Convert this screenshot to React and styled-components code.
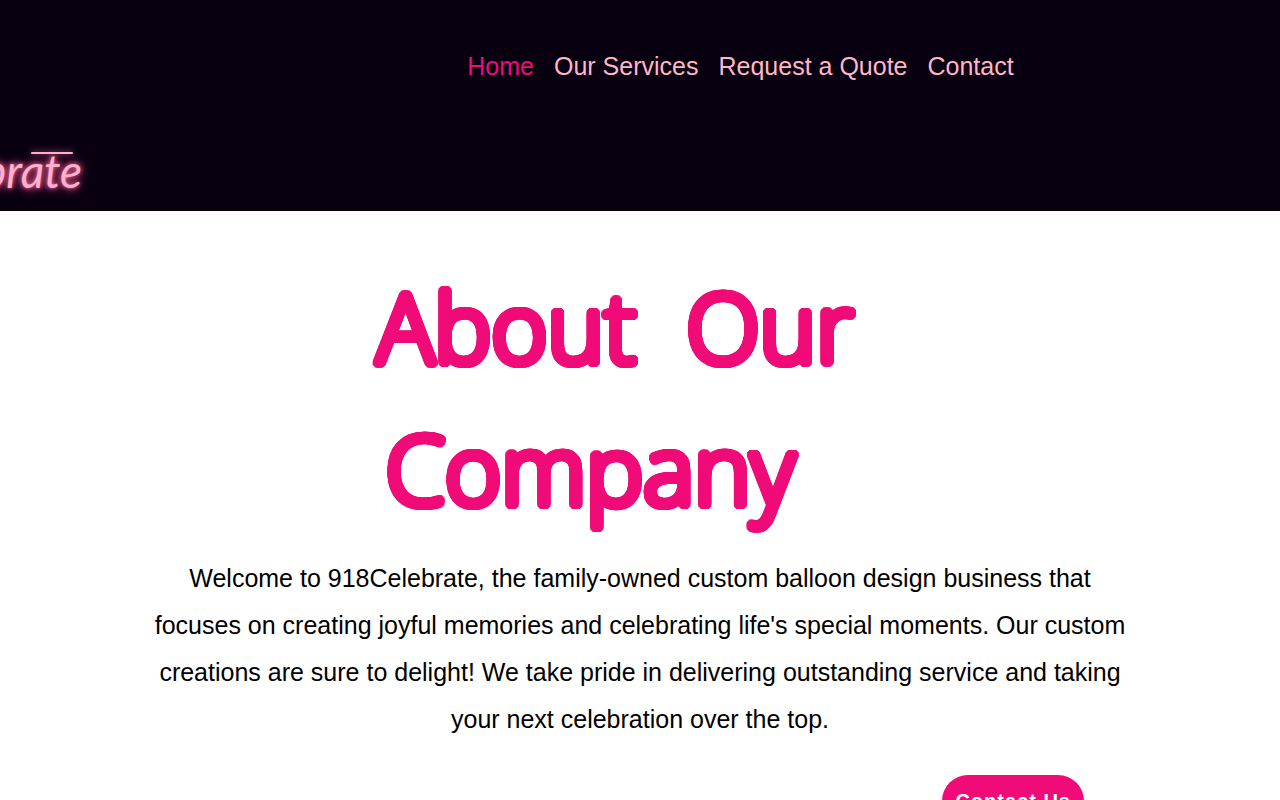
import styled, { createGlobalStyle } from "styled-components";

const GlobalStyle = createGlobalStyle`
    * {
        box-sizing: border-box;
    }

    body {
        margin: 0;
        background-color: #ffffff;
        color: #000000;
        font-family: "Liberation Sans", Arial, sans-serif;
        font-size: 25px;
    }
`;

const links = [
    { label: "Home", href: "#home", active: true },
    { label: "Our Services", href: "#services" },
    { label: "Request a Quote", href: "#quote" },
    { label: "Contact", href: "#contact" },
];

// hard shadows in a ring give the light letters a thick, rounded marker look
const markerOutline = [
    [4, 0],
    [4, 1],
    [4, 2],
    [3, 3],
    [2, 4],
    [1, 4],
    [0, 4],
]
    .flatMap(([x, y]) => [
        [x, y],
        [-x, y],
        [x, -y],
        [-x, -y],
    ])
    .map(([x, y]) => `${x}px ${y}px 0 #f00b78`)
    .join(", ");

function Header() {
    return (
        <HeaderBar>
            <Nav>
                {links.map((link) => (
                    <NavLink key={link.label} href={link.href} $active={link.active}>
                        {link.label}
                    </NavLink>
                ))}
            </Nav>
            <LogoRow>
                <Logo href="#home">
                    918Celebrate
                    <CrossBar viewBox="0 0 52 12" aria-hidden="true">
                        <path d="M6 6H46" />
                    </CrossBar>
                </Logo>
            </LogoRow>
        </HeaderBar>
    );
}

function App() {
    return (
        <>
            <GlobalStyle />
            <Header />
            <Main>
                <Title>About&nbsp; Our&nbsp;&nbsp; Company&nbsp;&nbsp;&nbsp;&nbsp;</Title>
                <Intro>
                    Welcome to 918Celebrate, the family-owned custom balloon design business that
                    focuses on creating joyful memories and celebrating life's special moments. Our
                    custom creations are sure to delight! We take pride in delivering outstanding
                    service and taking your next celebration over the top.
                </Intro>
                <Actions>
                    <ContactButton type="button">Contact Us</ContactButton>
                </Actions>
            </Main>
        </>
    );
}

export default App;

const HeaderBar = styled.header`
    display: flex;
    flex-direction: column;
    justify-content: space-between;
    height: 211px;
    padding: 52px 0 12px;
    background-color: #080011;
    overflow: hidden;
`;

const Nav = styled.nav`
    display: flex;
    gap: 20px;
    justify-content: center;
    padding-left: 201px;
`;

const NavLink = styled.a`
    color: ${(props) => (props.$active ? "#f00b78" : "#ffb6c9")};
    line-height: 29px;
    text-decoration: none;
    white-space: nowrap;
`;

const LogoRow = styled.div`
    display: flex;
    justify-content: flex-end;
    width: 82px;
`;

const Logo = styled.a`
    position: relative;
    color: #ffb0cd;
    font-family: "Comic Sans MS", Lato, sans-serif;
    font-size: 46px;
    font-style: italic;
    font-weight: 400;
    line-height: 56px;
    text-decoration: none;
    text-shadow:
        0 0 4px #e0608f,
        0 0 8px #c04070,
        0 0 12px #a03060;
`;

const CrossBar = styled.svg`
    position: absolute;
    top: 4px;
    right: 4px;
    width: 52px;
    height: 12px;
    fill: none;
    stroke: #ffb0cd;
    stroke-width: 2;
    stroke-linecap: round;
    filter: drop-shadow(0 0 3px #e0608f);
`;

const Main = styled.main`
    display: flex;
    flex-direction: column;
    align-items: center;
    padding: 44px 150px;
`;

const Title = styled.h1`
    max-width: 640px;
    margin: 0;
    color: #f00b78;
    font-family: "Comic Sans MS", "Open Sans", sans-serif;
    font-size: 96px;
    font-weight: 300;
    line-height: 142px;
    text-align: center;
    text-shadow: ${markerOutline};
`;

const Intro = styled.p`
    margin: 16px 0 32px;
    line-height: 47px;
    text-align: center;
`;

const Actions = styled.div`
    display: flex;
    justify-content: flex-end;
    width: 100%;
    padding-right: 46px;
`;

const ContactButton = styled.button`
    padding: 12px 13px;
    border: none;
    border-radius: 26px;
    background-color: #f00b78;
    color: #ffffff;
    font-family: inherit;
    font-size: 20px;
    font-weight: 700;
    line-height: 28px;
    letter-spacing: 1px;
`;
